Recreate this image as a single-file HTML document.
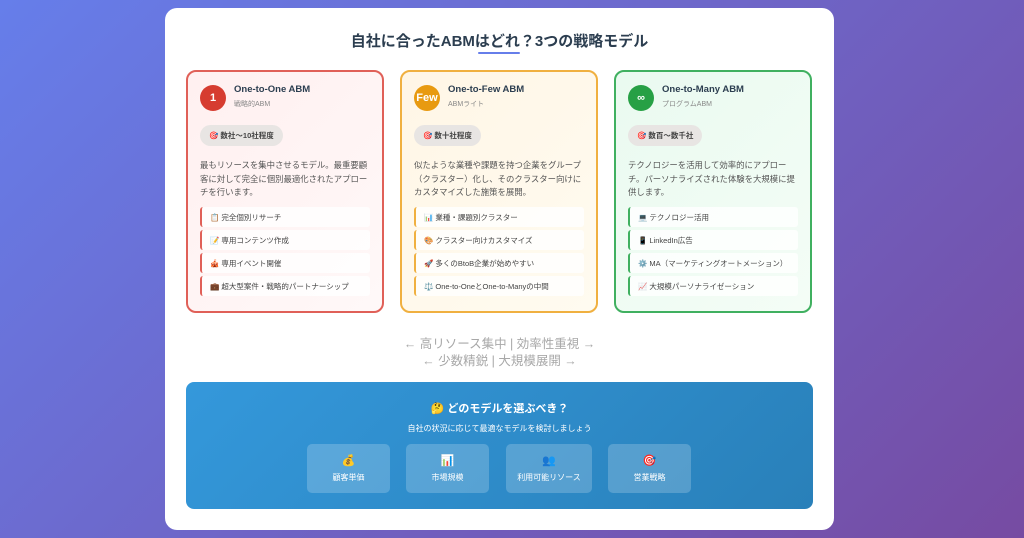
<!DOCTYPE html>
<html><head><meta charset="utf-8"><style>
*{margin:0;padding:0;box-sizing:border-box}
body{width:1024px;height:538px;overflow:hidden;background:linear-gradient(135deg,#667eea 0%,#764ba2 100%);font-family:"Liberation Sans","Noto Sans CJK JP",sans-serif;position:relative}
.main{position:absolute;left:165px;top:8px;width:669px;height:522px;background:#fff;border-radius:12px}
h1{position:absolute;left:0;right:0;top:22px;text-align:center;font-size:15px;font-weight:bold;color:#2c3e50}
.ul{position:absolute;left:313px;top:44px;width:42px;height:2px;background:#667eea;border-radius:1px}
.card{position:absolute;top:62px;width:198px;height:243px;border:2px solid;border-radius:10px;padding:13px 12px}
.c1{left:21px;border-color:#e06058;background:linear-gradient(135deg,#fff0f0,#fff8f8)}
.c2{left:235px;border-color:#f0b040;background:linear-gradient(135deg,#fff6e6,#fffbf0)}
.c3{left:449px;border-color:#40b060;background:linear-gradient(135deg,#eafaf0,#f4fdf6)}
.hd{display:flex;align-items:center;height:26px}
.ic{width:26px;height:26px;border-radius:50%;color:#fff;font-weight:bold;font-size:11px;display:flex;align-items:center;justify-content:center;margin-right:8px}
.t{font-size:9.5px;font-weight:bold;color:#2c3e50;margin-top:-4px}
.s{font-size:7px;color:#888;margin-top:4px}
.bd{display:inline-block;margin-top:14px;background:#e8e5e3;border-radius:11px;padding:5px 9px;font-size:7.5px;font-weight:bold;color:#444;height:21px}
.ds{margin-top:13px;font-size:8.4px;line-height:13.5px;color:#555;margin-right:-2px}
.it{margin-top:3px;height:20px;background:rgba(255,255,255,.8);border-left:2px solid;border-radius:3px;font-size:7.5px;color:#444;padding:5px 8px;white-space:nowrap}
.c1 .it{border-color:#e06058}.c2 .it{border-color:#f0b040}.c3 .it{border-color:#40b060}
.items{margin-top:7px}
.ar{position:absolute;left:0;right:0;text-align:center;font-size:12.5px;color:#a8a8a8;line-height:17px}
.blue{position:absolute;left:21px;top:374px;width:627px;height:127px;border-radius:8px;background:linear-gradient(135deg,#3498db,#2980b9);color:#fff;text-align:center}
.bt{position:absolute;top:18px;left:0;right:0;font-size:11px;font-weight:bold}
.bs{position:absolute;top:41px;left:0;right:0;font-size:8px}
.b{position:absolute;top:62px;height:49px;background:rgba(255,255,255,.2);border-radius:5px;font-size:8px;padding-top:10px}
.b span{display:block;font-size:11px;margin-bottom:5px}
</style></head><body>
<div class="main">
<h1>自社に合ったABMはどれ？3つの戦略モデル</h1><div class="ul"></div>
<div class="card c1"><div class="hd"><div class="ic" style="background:#d63c30">1</div><div><div class="t">One-to-One ABM</div><div class="s">戦略的ABM</div></div></div>
<div class="bd">🎯 数社〜10社程度</div>
<div class="ds">最もリソースを集中させるモデル。最重要顧客に対して完全に個別最適化されたアプローチを行います。</div>
<div class="items"><div class="it">📋 完全個別リサーチ</div><div class="it">📝 専用コンテンツ作成</div><div class="it">🎪 専用イベント開催</div><div class="it">💼 超大型案件・戦略的パートナーシップ</div></div></div>
<div class="card c2"><div class="hd"><div class="ic" style="background:#e89a10">Few</div><div><div class="t">One-to-Few ABM</div><div class="s">ABMライト</div></div></div>
<div class="bd">🎯 数十社程度</div>
<div class="ds">似たような業種や課題を持つ企業をグループ（クラスター）化し、そのクラスター向けにカスタマイズした施策を展開。</div>
<div class="items"><div class="it">📊 業種・課題別クラスター</div><div class="it">🎨 クラスター向けカスタマイズ</div><div class="it">🚀 多くのBtoB企業が始めやすい</div><div class="it">⚖️ One-to-OneとOne-to-Manyの中間</div></div></div>
<div class="card c3"><div class="hd"><div class="ic" style="background:#27a045">∞</div><div><div class="t">One-to-Many ABM</div><div class="s">プログラムABM</div></div></div>
<div class="bd">🎯 数百〜数千社</div>
<div class="ds">テクノロジーを活用して効率的にアプローチ。パーソナライズされた体験を大規模に提供します。</div>
<div class="items"><div class="it">💻 テクノロジー活用</div><div class="it">📱 LinkedIn広告</div><div class="it">⚙️ MA（マーケティングオートメーション）</div><div class="it">📈 大規模パーソナライゼーション</div></div></div>
<div class="ar" style="top:328px">← 高リソース集中 | 効率性重視 →</div>
<div class="ar" style="top:345px">← 少数精鋭 | 大規模展開 →</div>
<div class="blue"><div class="bt">🤔 どのモデルを選ぶべき？</div><div class="bs">自社の状況に応じて最適なモデルを検討しましょう</div>
<div class="b" style="left:121px;width:83px"><span>💰</span>顧客単価</div>
<div class="b" style="left:220px;width:83px"><span>📊</span>市場規模</div>
<div class="b" style="left:320px;width:86px"><span>👥</span>利用可能リソース</div>
<div class="b" style="left:422px;width:83px"><span>🎯</span>営業戦略</div>
</div></div>
</body></html>
